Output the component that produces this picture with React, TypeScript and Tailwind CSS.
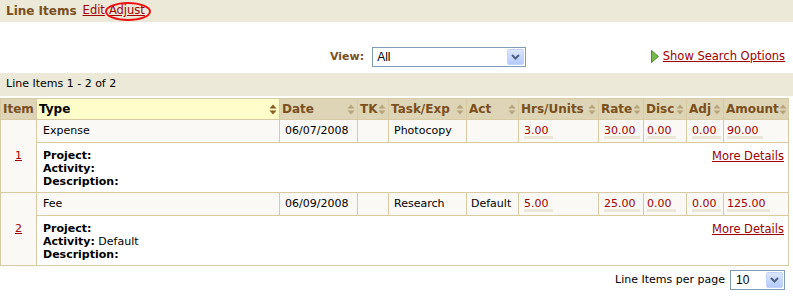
import React from 'react';

type Item = {
  no: string;
  type: string;
  date: string;
  task: string;
  act: string;
  hrs: string;
  rate: string;
  disc: string;
  adj: string;
  amount: string;
  activity: string;
};

const items: Item[] = [
  { no: '1', type: 'Expense', date: '06/07/2008', task: 'Photocopy', act: '', hrs: '3.00', rate: '30.00', disc: '0.00', adj: '0.00', amount: '90.00', activity: '' },
  { no: '2', type: 'Fee', date: '06/09/2008', task: 'Research', act: 'Default', hrs: '5.00', rate: '25.00', disc: '0.00', adj: '0.00', amount: '125.00', activity: 'Default' },
];

const columns = [
  { label: 'Type', w: 'w-[243px]', active: true },
  { label: 'Date', w: 'w-[78px]' },
  { label: 'TK', w: 'w-[31px]' },
  { label: 'Task/Exp', w: 'w-[78px]' },
  { label: 'Act', w: 'w-[52px]' },
  { label: 'Hrs/Units', w: 'w-[80px]' },
  { label: 'Rate', w: 'w-[45px]' },
  { label: 'Disc', w: 'w-[43px]' },
  { label: 'Adj', w: 'w-[37px]' },
  { label: 'Amount', w: 'w-[65px]' },
];

function SortIcon({ dark }: { dark?: boolean }) {
  const c = dark ? '#8a5a20' : '#b8a47c';
  return (
    <svg width="8" height="11" viewBox="0 0 8 11" className="shrink-0">
      <path d="M4 0.5 L7.5 4.5 L0.5 4.5 Z" fill={c} />
      <path d="M0.5 6.5 L7.5 6.5 L4 10.5 Z" fill={c} />
    </svg>
  );
}

function DropButton() {
  return (
    <div className="w-[17px] h-[16px] mr-[1px] rounded-[2px] border border-[#c3d3fd] bg-gradient-to-b from-[#dbe6fe] to-[#b6cbfb] flex items-center justify-center">
      <svg width="9" height="6" viewBox="0 0 9 6">
        <path d="M1 1 L4.5 4.5 L8 1" stroke="#4d6185" strokeWidth="2" fill="none" />
      </svg>
    </div>
  );
}

function Num({ v }: { v: string }) {
  return (
    <span className="inline-block leading-[11px] pr-1 border-b-[3px] border-[#ebe7d9] text-[#a00000]">{v}</span>
  );
}

export default function App() {
  return (
    <div className="w-[793px] h-[300px] bg-white text-[11px] text-black font-['DejaVu_Sans',Verdana,sans-serif]">
      {/* title bar */}
      <div className="relative h-[22px] bg-[#ece9d9] flex items-center pl-[6px]">
        <span className="text-[12px] font-bold text-[#7a4f1d]">Line Items</span>
        <a className="ml-[6px] text-[11.5px] text-[#a00000] underline">Edit</a>
        <a className="ml-[4px] text-[11.5px] text-[#a00000] underline">Adjust</a>
        <div className="absolute left-[105px] top-[2px] w-[46px] h-[19px] rounded-[50%] border-2 border-[#ee1111]" />
      </div>

      {/* view row */}
      <div className="h-[51px] flex items-end pb-[6px] pr-[8px]">
        <div className="h-[20px] flex items-center ml-[330px]">
          <span className="font-bold text-[#7a4f1d] mr-[8px]">View:</span>
          <div className="w-[154px] h-[20px] border border-[#7f9db9] flex items-center justify-between pl-[4px]">
            <span className="text-[12px] font-['Liberation_Sans',Arial,sans-serif]">All</span>
            <DropButton />
          </div>
        </div>
        <div className="ml-auto h-[20px] flex items-center pb-[1px]">
          <svg width="8" height="13" viewBox="0 0 8 13" className="mr-[4px]">
            <path d="M0.5 0.5 L7.5 6.5 L0.5 12.5 Z" fill="#77b94a" stroke="#4e8a2a" />
          </svg>
          <a className="text-[#a00000] underline text-[11.5px]">Show Search Options</a>
        </div>
      </div>

      {/* summary bar */}
      <div className="h-[23px] bg-[#ece9d9] flex items-center pl-[6px]">Line Items 1 - 2 of 2</div>

      <table className="mt-[2px] w-[789px] border-collapse table-fixed">
        <thead>
          <tr className="h-[21px]">
            <th className="w-[36px] border border-[#d8caa3] bg-[#ddd5b6] text-[#7a4f1d] text-[12px] text-left pl-[2px]">Item</th>
            {columns.map(c => (
              <th
                key={c.label}
                className={`${c.w} border border-[#d8caa3] text-[12px] text-left pl-[2px] pr-[2px] ${c.active ? 'bg-[#fffdc9] text-black' : 'bg-[#ddd5b6] text-[#7a4f1d]'}`}
              >
                <div className="flex items-center justify-between">
                  <span className="whitespace-nowrap">{c.label}</span>
                  <SortIcon dark={c.active} />
                </div>
              </th>
            ))}
          </tr>
        </thead>
        <tbody>
          {items.map(it => (
            <React.Fragment key={it.no}>
              <tr className="h-[23px] bg-[#faf9f6]">
                <td rowSpan={2} className="border border-[#d8caa3] text-center align-middle">
                  <a className="text-[#a00000] underline">{it.no}</a>
                </td>
                <td className="border border-[#d8caa3] pl-[6px]">{it.type}</td>
                <td className="border border-[#d8caa3] pl-[5px]">{it.date}</td>
                <td className="border border-[#d8caa3]"></td>
                <td className="border border-[#d8caa3] pl-[5px]">{it.task}</td>
                <td className="border border-[#d8caa3] pl-[4px]">{it.act}</td>
                <td className="border border-[#d8caa3] pl-[5px]"><Num v={it.hrs} /></td>
                <td className="border border-[#d8caa3] pl-[5px]"><Num v={it.rate} /></td>
                <td className="border border-[#d8caa3] pl-[3px]"><Num v={it.disc} /></td>
                <td className="border border-[#d8caa3] pl-[5px]"><Num v={it.adj} /></td>
                <td className="border border-[#d8caa3] pl-[3px]"><Num v={it.amount} /></td>
              </tr>
              <tr className="bg-white">
                <td colSpan={10} className="border border-[#d8caa3] pl-[6px] pr-[4px] pt-[6px] pb-[4px] align-top">
                  <div className="flex justify-between leading-[13px]">
                    <div>
                      <div><b>Project:</b></div>
                      <div><b>Activity:</b>{it.activity ? ` ${it.activity}` : ''}</div>
                      <div><b>Description:</b></div>
                    </div>
                    <a className="text-[#a00000] underline text-[11.5px] leading-[13px] mt-[1px]">More Details</a>
                  </div>
                </td>
              </tr>
            </React.Fragment>
          ))}
        </tbody>
      </table>

      {/* per page */}
      <div className="flex items-center justify-end mt-[4px] pr-[8px]">
        <span className="mr-[5px]">Line Items per page</span>
        <div className="w-[55px] h-[20px] border border-[#7f9db9] flex items-center justify-between pl-[5px]">
          <span className="text-[12px] font-['Liberation_Sans',Arial,sans-serif]">10</span>
          <DropButton />
        </div>
      </div>
    </div>
  );
}
